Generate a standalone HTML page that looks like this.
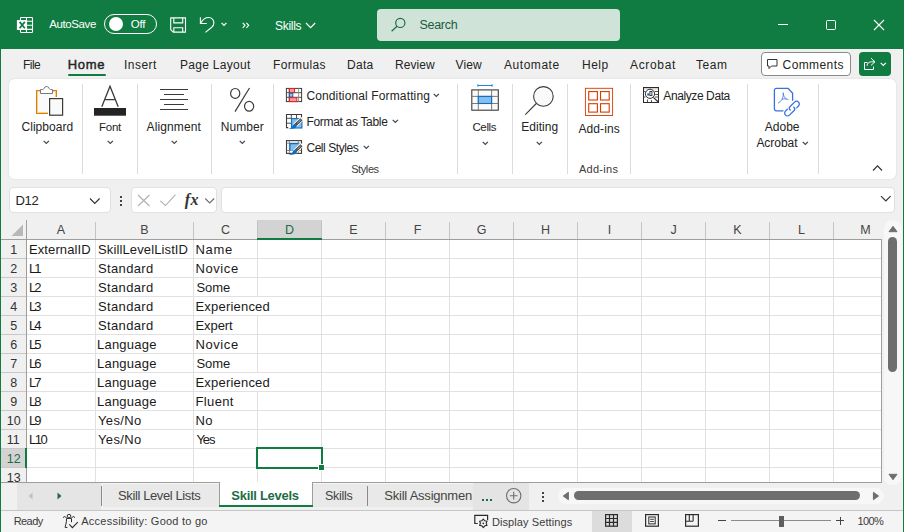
<!DOCTYPE html>
<html lang="en"><head><meta charset="utf-8"><title>Skills - Excel</title>
<style>
html,body{margin:0;padding:0;}
body{width:904px;height:532px;overflow:hidden;position:relative;background:#f0f0f0;font-family:"Liberation Sans",sans-serif;}
#app{position:absolute;left:0;top:0;width:904px;height:532px;overflow:hidden;}
#app div,#app span,#app svg{position:absolute;display:block;}
#app span{white-space:nowrap;}
</style></head><body><div id="app">
<div style="left:0px;top:0px;width:904px;height:49px;background:#107c41;"></div>
<svg style="left:16px;top:16px;" width="18" height="18" viewBox="0 0 18 18" fill="none"><rect x="4.5" y="1.5" width="12" height="15" rx="0.8" stroke="#fff" stroke-width="1.1"/><path d="M10.5 1.5v15M4.5 5.2h12M4.5 9.3h12M4.5 13.4h12" stroke="#fff" stroke-width="1.1"/><rect x="0.9" y="4.1" width="9.6" height="9.9" fill="#fff"/><path d="M3.6 5.9l5.2 6.3M8.8 5.9l-5.2 6.3" stroke="#107c41" stroke-width="1.7"/></svg>
<div style="left:104px;top:14px;width:53px;height:20px;box-sizing:border-box;border:1px solid #fff;border-radius:10px;"></div>
<div style="left:109.2px;top:17.3px;width:13.6px;height:13.6px;border-radius:7px;background:#fff;"></div>
<svg style="left:169px;top:16px;" width="18" height="18" viewBox="0 0 18 18" fill="none"><path d="M1.7 1.9H16.5V16.1H4.2L1.7 13.6z" stroke="#fff" stroke-width="1.1" stroke-linejoin="round"/><path d="M4.8 1.9V6.9H13.7V1.9M4.8 16.1V11.7H13.7V16.1" stroke="#fff" stroke-width="1.1"/></svg>
<svg style="left:198px;top:15px;" width="18" height="19" viewBox="0 0 18 19" fill="none"><path d="M2.4 2.3V8.5H8.8" stroke="#fff" stroke-width="1.1"/><path d="M2.7 8.2C4.5 4.8 7.5 2.5 10.7 2.5C13.8 2.5 15.9 4.9 15.9 7.9C15.9 10 14.8 11.4 13.5 12.5L7.4 17.4" stroke="#fff" stroke-width="1.1"/></svg>
<svg style="left:221px;top:22px;" width="6" height="5" viewBox="0 0 6 5" fill="none"><path d="M0.6 0.8L3 3.4 5.4 0.8" stroke="#fff" stroke-width="1.2"/></svg>
<svg style="left:242px;top:22.4px;" width="8" height="7" viewBox="0 0 8 7" fill="none"><path d="M0.7 0.8L3 3.3 0.7 5.8M4.4 0.8L6.7 3.3 4.4 5.8" stroke="#fff" stroke-width="1.1"/></svg>
<svg style="left:305px;top:22px;" width="12" height="7" viewBox="0 0 12 7" fill="none"><path d="M1 1l4.6 4.6L10.2 1" stroke="#fff" stroke-width="1.2"/></svg>
<div style="left:377px;top:9px;width:243px;height:32px;background:#cfe3d8;border-radius:4px;"></div>
<svg style="left:390px;top:16px;" width="17" height="17" viewBox="0 0 17 17" fill="none"><circle cx="10.3" cy="6.9" r="4.6" stroke="#1e6b45" stroke-width="1.2"/><path d="M7 10.3L1.6 15.2" stroke="#1e6b45" stroke-width="1.2"/></svg>
<div style="left:778px;top:24px;width:10px;height:1px;background:#fff;"></div>
<div style="left:826px;top:20px;width:10px;height:10px;box-sizing:border-box;border:1px solid #fff;border-radius:1.5px;"></div>
<svg style="left:873px;top:19px;" width="12" height="12" viewBox="0 0 12 12" fill="none"><path d="M1 1l10 10M11 1L1 11" stroke="#fff" stroke-width="1.1"/></svg>
<div style="left:68px;top:74px;width:38px;height:2px;background:#107c41;border-radius:1px;"></div>
<div style="left:761px;top:52px;width:90px;height:24px;box-sizing:border-box;border:1px solid #8a8a8a;border-radius:4px;background:#fff;"></div>
<svg style="left:766px;top:58px;" width="12" height="12" viewBox="0 0 12 12" fill="none"><path d="M1.5 1.5h9.5v6.5H5.5L3 10.6V8H1.5z" stroke="#333" stroke-width="1" stroke-linejoin="round"/></svg>
<div style="left:859px;top:52px;width:32px;height:24px;background:#107c41;border-radius:4px;"></div>
<svg style="left:863px;top:57px;" width="13" height="14" viewBox="0 0 13 14" fill="none"><path d="M4.5 5.5H1.5v7h9V9.5" stroke="#fff"/><path d="M8 1.2l4 3.6-4 3.6M12 4.8H8.5C6 4.8 4.2 6.3 4 8.8" stroke="#fff"/></svg>
<svg style="left:880px;top:62px;" width="7" height="5" viewBox="0 0 7 5" fill="none"><path d="M0.7 0.8L3.3 3.4 5.9 0.8" stroke="#fff" stroke-width="1.2"/></svg>
<div style="left:9px;top:79px;width:886.5px;height:100px;background:#ffffff;border-radius:5.5px;box-shadow:0 0 1.5px rgba(0,0,0,.16);"></div>
<div style="left:82px;top:84px;width:1px;height:90px;background:#dcdcdc;"></div>
<div style="left:137px;top:84px;width:1px;height:90px;background:#dcdcdc;"></div>
<div style="left:211px;top:84px;width:1px;height:90px;background:#dcdcdc;"></div>
<div style="left:273px;top:84px;width:1px;height:90px;background:#dcdcdc;"></div>
<div style="left:457px;top:84px;width:1px;height:90px;background:#dcdcdc;"></div>
<div style="left:512px;top:84px;width:1px;height:90px;background:#dcdcdc;"></div>
<div style="left:567px;top:84px;width:1px;height:90px;background:#dcdcdc;"></div>
<div style="left:630px;top:84px;width:1px;height:90px;background:#dcdcdc;"></div>
<div style="left:747px;top:84px;width:1px;height:90px;background:#dcdcdc;"></div>
<div style="left:818px;top:84px;width:1px;height:90px;background:#dcdcdc;"></div>
<svg style="left:34px;top:84px;" width="32" height="34" viewBox="0 0 32 34" fill="none"><rect x="2.5" y="6.5" width="20" height="23" fill="#fafafa" stroke="#e07a10"/><rect x="3.5" y="7.5" width="18" height="21" stroke="#f8d27f"/><path d="M6.5 9.5V5.5H8.5C9.6 5.5 9.9 4.7 10.3 4C10.7 3.2 11.2 2.6 12 2.6H13.2C14 2.6 14.5 3.2 14.9 4C15.3 4.7 15.6 5.5 16.7 5.5H18.5V9.5z" fill="#fff" stroke="#7a7a7a"/><rect x="14" y="13" width="16.5" height="20" fill="#fff"/><rect x="15.6" y="14.6" width="13" height="16.6" fill="#fafafa" stroke="#3b3b3b" stroke-width="1.2"/></svg>
<svg style="left:43px;top:140px;" width="7" height="5" viewBox="0 0 7 5" fill="none"><path d="M0.7 0.8L3.3 3.4 5.9 0.8" stroke="#444" stroke-width="1.2"/></svg>
<svg style="left:94px;top:85px;" width="32" height="32" viewBox="0 0 32 32" fill="none"><path d="M7.8 21.7L16 1.2 24.2 21.7M11.3 14.7h9.4" stroke="#3b3b3b" stroke-width="1.3" stroke-linejoin="miter"/><rect x="0" y="23" width="32" height="7.7" fill="#242424"/></svg>
<svg style="left:106.5px;top:140px;" width="7" height="5" viewBox="0 0 7 5" fill="none"><path d="M0.7 0.8L3.3 3.4 5.9 0.8" stroke="#444" stroke-width="1.2"/></svg>
<svg style="left:159px;top:86px;" width="30" height="26" viewBox="0 0 30 26" fill="none"><path d="M1 3.5h28M5 8.5h20M1 13.5h28M5 18.5h20M1 23.5h28" stroke="#3b3b3b" stroke-width="1.1"/></svg>
<svg style="left:170.5px;top:140px;" width="7" height="5" viewBox="0 0 7 5" fill="none"><path d="M0.7 0.8L3.3 3.4 5.9 0.8" stroke="#444" stroke-width="1.2"/></svg>
<svg style="left:228px;top:86px;" width="28" height="28" viewBox="0 0 28 28" fill="none"><ellipse cx="7.2" cy="7.4" rx="4.6" ry="4.9" stroke="#3b3b3b" stroke-width="1.2"/><ellipse cx="21.1" cy="20.3" rx="4.6" ry="4.9" stroke="#3b3b3b" stroke-width="1.2"/><path d="M21.5 2L7 25.6" stroke="#3b3b3b" stroke-width="1.2"/></svg>
<svg style="left:238.5px;top:140px;" width="7" height="5" viewBox="0 0 7 5" fill="none"><path d="M0.7 0.8L3.3 3.4 5.9 0.8" stroke="#444" stroke-width="1.2"/></svg>
<svg style="left:285px;top:87px;" width="18" height="16" viewBox="0 0 18 16" fill="none"><rect x="1.4" y="1.4" width="15.2" height="13.2" fill="#fff" stroke="#3b3b3b"/><path d="M1.4 5.7h15.2M1.4 10.3h15.2M4.2 1.4v13.2" stroke="#3b3b3b" stroke-width="0.9"/><path d="M13.6 1.4v13.2" stroke="#8a8a8a" stroke-width="0.9"/><rect x="4.5" y="1.5" width="5" height="4" fill="#ff9aa2" stroke="#e0241b"/><rect x="4.5" y="6.3" width="3.3" height="3.6" fill="#8cc3f0" stroke="#0f6cbd"/><rect x="4.5" y="10.7" width="7.3" height="3.9" fill="#ff9aa2" stroke="#e0241b"/></svg>
<svg style="left:433.3px;top:93px;" width="7" height="5" viewBox="0 0 7 5" fill="none"><path d="M0.7 0.8L3.3 3.4 5.9 0.8" stroke="#444" stroke-width="1.2"/></svg>
<svg style="left:285px;top:113px;" width="18" height="17" viewBox="0 0 18 17" fill="none"><path d="M3.2 14.6H1.5V1.5H16.5V4.6" stroke="#3b3b3b" stroke-width="1.1"/><path d="M1.5 5.3h5M1.5 10.2h5M6.3 1.5v4M11.5 1.5v4" stroke="#3b3b3b" stroke-width="0.9"/><rect x="6.6" y="5.6" width="10.3" height="9.4" fill="#83beec" stroke="#0f6cbd" stroke-width="1.1"/><path d="M17.2 5.3L9.5 13" stroke="#fff" stroke-width="4.5"/><path d="M16.5 6.2L10.7 11.8" stroke="#3b3b3b" stroke-width="2.8"/><path d="M16.2 6.5L11.2 11.3" stroke="#fff" stroke-width="1" stroke-dasharray="1 0.7"/><path d="M10.2 10.8l2 2c-1.2 2.8-4.6 3.6-8.7 2.6 2.6-.3 3.8-1.2 4.4-2.8.4-1 1.3-1.7 2.3-1.8z" fill="#0f6cbd"/></svg>
<svg style="left:391.5px;top:119px;" width="7" height="5" viewBox="0 0 7 5" fill="none"><path d="M0.7 0.8L3.3 3.4 5.9 0.8" stroke="#444" stroke-width="1.2"/></svg>
<svg style="left:285px;top:139px;" width="18" height="17" viewBox="0 0 18 17" fill="none"><rect x="1.5" y="1.6" width="15" height="12.8" fill="#fff" stroke="#3b3b3b" stroke-width="1.1"/><path d="M4.4 1.6v12.8M13.3 1.6v12.8M1.5 4.2h15M1.5 11.5h15" stroke="#6e6e6e" stroke-width="0.8"/><rect x="4.7" y="4.5" width="8.6" height="7" fill="#83beec"/><path d="M4.9 11.5V4.7h8.4" stroke="#0f6cbd" stroke-width="1.2"/><path d="M17.2 5.3L9.5 13" stroke="#fff" stroke-width="4.5"/><path d="M16.5 6.2L10.7 11.8" stroke="#3b3b3b" stroke-width="2.8"/><path d="M16.2 6.5L11.2 11.3" stroke="#fff" stroke-width="1" stroke-dasharray="1 0.7"/><path d="M10.2 10.8l2 2c-1.2 2.8-4.6 3.6-8.7 2.6 2.6-.3 3.8-1.2 4.4-2.8.4-1 1.3-1.7 2.3-1.8z" fill="#0f6cbd"/></svg>
<svg style="left:362.8px;top:145px;" width="7" height="5" viewBox="0 0 7 5" fill="none"><path d="M0.7 0.8L3.3 3.4 5.9 0.8" stroke="#444" stroke-width="1.2"/></svg>
<svg style="left:470px;top:84px;" width="30" height="28" viewBox="0 0 30 28" fill="none"><path d="M7.9 1.5H22.1M7.9 0.2v2.6M22.1 0.2v2.6" stroke="#1e88d2" stroke-width="1"/><rect x="1.8" y="5.9" width="26.5" height="20.3" fill="#fafafa" stroke="#3b3b3b" stroke-width="1.1"/><path d="M8.3 5.9v20.3M21.6 5.9v20.3M1.8 12.4h26.5M1.8 19.5h26.5" stroke="#6e6e6e" stroke-width="0.9"/><rect x="8.3" y="12.4" width="13.3" height="7.1" fill="#83beec" stroke="#0f6cbd" stroke-width="1.1"/></svg>
<svg style="left:481.5px;top:140.5px;" width="7" height="5" viewBox="0 0 7 5" fill="none"><path d="M0.7 0.8L3.3 3.4 5.9 0.8" stroke="#444" stroke-width="1.2"/></svg>
<svg style="left:523px;top:85px;" width="34" height="32" viewBox="0 0 34 32" fill="none"><circle cx="20.4" cy="11.4" r="9.8" fill="#fafafa" stroke="#3b3b3b" stroke-width="1.1"/><path d="M13.3 18.5L2.3 29.7" stroke="#3b3b3b" stroke-width="1.1"/></svg>
<svg style="left:536px;top:140.5px;" width="7" height="5" viewBox="0 0 7 5" fill="none"><path d="M0.7 0.8L3.3 3.4 5.9 0.8" stroke="#444" stroke-width="1.2"/></svg>
<svg style="left:584px;top:87px;" width="30" height="30" viewBox="0 0 30 30" fill="none"><rect x="1.4" y="1.3" width="27.2" height="27.2" stroke="#d83b01" stroke-width="0.9"/><rect x="4.7" y="4.6" width="8.7" height="8.4" stroke="#d83b01" stroke-width="1.1"/><rect x="16.5" y="4.6" width="8.7" height="8.4" stroke="#d83b01" stroke-width="1.1"/><rect x="4.7" y="16.7" width="8.7" height="8.4" stroke="#d83b01" stroke-width="1.1"/><rect x="16.5" y="16.7" width="8.7" height="8.4" stroke="#d83b01" stroke-width="1.1"/></svg>
<svg style="left:642px;top:86px;" width="18" height="18" viewBox="0 0 18 18" fill="none"><rect x="1.5" y="1.5" width="15" height="15" fill="#fff" stroke="#2b2b2b"/><rect x="2" y="2" width="14" height="1.6" fill="#d4d4d4"/><path d="M12.8 5.5h3.2M13.2 8.5h2.8M13 11h3M5.5 13.5v2.5M9.5 14v2M2 5.5h1.5M2 11h1.5" stroke="#2b2b2b" stroke-width="0.8"/><circle cx="8" cy="7.8" r="4.6" fill="#fff" stroke="#2b2b2b"/><rect x="5.3" y="7.3" width="2" height="2.3" fill="#0f6cbd"/><rect x="7.9" y="5.5" width="2" height="4.1" fill="#fff" stroke="#2b2b2b" stroke-width="0.9"/><path d="M11.4 11.4L16.8 16.5" stroke="#2b2b2b" stroke-width="1.2"/></svg>
<svg style="left:772px;top:86px;" width="29" height="32" viewBox="0 0 29 32" fill="none"><path d="M11.4 24.8H4.4a2 2 0 0 1-2-2V4.3a2 2 0 0 1 2-2H16L20.6 7.2V14.7" stroke="#3b70e0" stroke-width="1.3" stroke-linejoin="round"/><path d="M11.2 6.7c.4 2.4-.2 4.7-1.3 6.7-1 1.7-2.3 3-3.9 3.7M10 13.3c2.1-.7 4.3-.6 6.4.3M11.2 6.7c.1 2.7 1.3 5 3.3 6.6" stroke="#3b70e0" stroke-width="0.8"/><g transform="translate(20 22.6) rotate(-45)"><path d="M-2.3 -0.3C-2.3 -1.8 -1.6 -2.8 -0.2 -2.8H6.4a2.8 2.8 0 0 1 0 5.6H3.8M2.3 0.3C2.3 1.8 1.6 2.8 0.2 2.8H-6.4a2.8 2.8 0 0 1 0 -5.6H-3.8" stroke="#3b70e0" stroke-width="1.3" stroke-linecap="round"/></g></svg>
<svg style="left:801.5px;top:140.5px;" width="7" height="5" viewBox="0 0 7 5" fill="none"><path d="M0.7 0.8L3.3 3.4 5.9 0.8" stroke="#444" stroke-width="1.2"/></svg>
<svg style="left:872px;top:164px;" width="12" height="8" viewBox="0 0 12 8" fill="none"><path d="M1 6.5L5.5 1.8 10 6.5" stroke="#333" stroke-width="1.2"/></svg>
<div style="left:9px;top:187px;width:102px;height:26px;box-sizing:border-box;border:1px solid #e0e0e0;border-radius:4px;background:#fff;"></div>
<div style="left:131px;top:187px;width:86px;height:26px;box-sizing:border-box;border:1px solid #e0e0e0;border-radius:4px;background:#fff;"></div>
<div style="left:221px;top:187px;width:674px;height:26px;box-sizing:border-box;border:1px solid #e0e0e0;border-radius:4px;background:#fff;"></div>
<svg style="left:89px;top:197px;" width="12" height="8" viewBox="0 0 12 8" fill="none"><path d="M1 1.5L5.8 6.3 10.6 1.5" stroke="#333" stroke-width="1.2"/></svg>
<div style="left:120px;top:195.5px;width:2px;height:2px;background:#444;"></div>
<div style="left:120px;top:199.5px;width:2px;height:2px;background:#444;"></div>
<div style="left:120px;top:203.5px;width:2px;height:2px;background:#444;"></div>
<svg style="left:137px;top:194px;" width="14" height="13" viewBox="0 0 14 13" fill="none"><path d="M1 1l11.5 11M12.5 1L1 12" stroke="#b0b0b0" stroke-width="1.1"/></svg>
<svg style="left:158px;top:194px;" width="19" height="13" viewBox="0 0 19 13" fill="none"><path d="M2.3 6.8l5.2 4.7L17.5 0.7" stroke="#b0b0b0" stroke-width="1.1"/></svg>
<svg style="left:204px;top:197px;" width="12" height="8" viewBox="0 0 12 8" fill="none"><path d="M1.2 1.5l4.5 4.5L10.2 1.5" stroke="#6e6e6e" stroke-width="1.1"/></svg>
<svg style="left:880px;top:195px;" width="12" height="8" viewBox="0 0 12 8" fill="none"><path d="M1 1.2L5.8 6 10.6 1.2" stroke="#333" stroke-width="1.2"/></svg>
<div style="left:27px;top:240px;width:854px;height:242px;background:#ffffff;"></div>
<div style="left:1px;top:220px;width:881px;height:19px;background:#f0f0f0;"></div>
<div style="left:257px;top:220px;width:65px;height:18px;background:#d3d3d3;"></div>
<div style="left:257px;top:221px;width:1px;height:17px;background:#c2c2c2;"></div>
<div style="left:321px;top:221px;width:1px;height:17px;background:#c2c2c2;"></div>
<div style="left:257px;top:238px;width:65px;height:2px;background:#107c41;"></div>
<div style="left:1px;top:449px;width:24px;height:18px;background:#d3d3d3;"></div>
<div style="left:25px;top:448px;width:2px;height:20px;background:#107c41;"></div>
<div style="left:95px;top:240px;width:1px;height:242px;background:#e1e1e1;"></div>
<div style="left:193px;top:240px;width:1px;height:242px;background:#e1e1e1;"></div>
<div style="left:257px;top:240px;width:1px;height:242px;background:#e1e1e1;"></div>
<div style="left:321px;top:240px;width:1px;height:242px;background:#e1e1e1;"></div>
<div style="left:385px;top:240px;width:1px;height:242px;background:#e1e1e1;"></div>
<div style="left:449px;top:240px;width:1px;height:242px;background:#e1e1e1;"></div>
<div style="left:513px;top:240px;width:1px;height:242px;background:#e1e1e1;"></div>
<div style="left:577px;top:240px;width:1px;height:242px;background:#e1e1e1;"></div>
<div style="left:641px;top:240px;width:1px;height:242px;background:#e1e1e1;"></div>
<div style="left:705px;top:240px;width:1px;height:242px;background:#e1e1e1;"></div>
<div style="left:769px;top:240px;width:1px;height:242px;background:#e1e1e1;"></div>
<div style="left:833px;top:240px;width:1px;height:242px;background:#e1e1e1;"></div>
<div style="left:27px;top:258px;width:854px;height:1px;background:#e1e1e1;"></div>
<div style="left:27px;top:277px;width:854px;height:1px;background:#e1e1e1;"></div>
<div style="left:27px;top:296px;width:854px;height:1px;background:#e1e1e1;"></div>
<div style="left:27px;top:315px;width:854px;height:1px;background:#e1e1e1;"></div>
<div style="left:27px;top:334px;width:854px;height:1px;background:#e1e1e1;"></div>
<div style="left:27px;top:353px;width:854px;height:1px;background:#e1e1e1;"></div>
<div style="left:27px;top:372px;width:854px;height:1px;background:#e1e1e1;"></div>
<div style="left:27px;top:391px;width:854px;height:1px;background:#e1e1e1;"></div>
<div style="left:27px;top:410px;width:854px;height:1px;background:#e1e1e1;"></div>
<div style="left:27px;top:429px;width:854px;height:1px;background:#e1e1e1;"></div>
<div style="left:27px;top:448px;width:854px;height:1px;background:#e1e1e1;"></div>
<div style="left:27px;top:467px;width:854px;height:1px;background:#e1e1e1;"></div>
<div style="left:257px;top:297px;width:1px;height:18px;background:#ffffff;"></div>
<div style="left:257px;top:373px;width:1px;height:18px;background:#ffffff;"></div>
<div style="left:26px;top:222px;width:1px;height:17px;background:#c4c4c4;"></div>
<div style="left:95px;top:222px;width:1px;height:17px;background:#c4c4c4;"></div>
<div style="left:193px;top:222px;width:1px;height:17px;background:#c4c4c4;"></div>
<div style="left:385px;top:222px;width:1px;height:17px;background:#c4c4c4;"></div>
<div style="left:449px;top:222px;width:1px;height:17px;background:#c4c4c4;"></div>
<div style="left:513px;top:222px;width:1px;height:17px;background:#c4c4c4;"></div>
<div style="left:577px;top:222px;width:1px;height:17px;background:#c4c4c4;"></div>
<div style="left:641px;top:222px;width:1px;height:17px;background:#c4c4c4;"></div>
<div style="left:705px;top:222px;width:1px;height:17px;background:#c4c4c4;"></div>
<div style="left:769px;top:222px;width:1px;height:17px;background:#c4c4c4;"></div>
<div style="left:833px;top:222px;width:1px;height:17px;background:#c4c4c4;"></div>
<div style="left:26px;top:220px;width:1px;height:262px;background:#9e9e9e;"></div>
<div style="left:1px;top:239px;width:880px;height:1px;background:#9e9e9e;"></div>
<div style="left:257px;top:238px;width:65px;height:2px;background:#107c41;"></div>
<div style="left:1px;top:258px;width:25px;height:1px;background:#c8c8c8;"></div>
<div style="left:1px;top:277px;width:25px;height:1px;background:#c8c8c8;"></div>
<div style="left:1px;top:296px;width:25px;height:1px;background:#c8c8c8;"></div>
<div style="left:1px;top:315px;width:25px;height:1px;background:#c8c8c8;"></div>
<div style="left:1px;top:334px;width:25px;height:1px;background:#c8c8c8;"></div>
<div style="left:1px;top:353px;width:25px;height:1px;background:#c8c8c8;"></div>
<div style="left:1px;top:372px;width:25px;height:1px;background:#c8c8c8;"></div>
<div style="left:1px;top:391px;width:25px;height:1px;background:#c8c8c8;"></div>
<div style="left:1px;top:410px;width:25px;height:1px;background:#c8c8c8;"></div>
<div style="left:1px;top:429px;width:25px;height:1px;background:#c8c8c8;"></div>
<div style="left:1px;top:448px;width:25px;height:1px;background:#c8c8c8;"></div>
<div style="left:1px;top:467px;width:25px;height:1px;background:#c8c8c8;"></div>
<div style="left:25px;top:448px;width:2px;height:20px;background:#107c41;"></div>
<div style="left:881px;top:239px;width:1px;height:244px;background:#9e9e9e;"></div>
<div style="left:1px;top:482px;width:881px;height:1px;background:#9e9e9e;"></div>
<svg style="left:11px;top:224px;" width="13" height="13" viewBox="0 0 13 13" fill="none"><path d="M12 0.5V12H0.5z" fill="#b8b8b8"/></svg>
<div style="left:256px;top:447px;width:67px;height:22px;box-sizing:border-box;border:2px solid #107c41;"></div>
<div style="left:318px;top:464px;width:7px;height:7px;background:#ffffff;"></div>
<div style="left:319px;top:465px;width:5px;height:5px;background:#107c41;"></div>
<div style="left:1px;top:483px;width:902px;height:49px;background:#f0f0f0;"></div>
<div style="left:884px;top:220px;width:17.5px;height:265px;background:#f7f7f7;border-radius:8.7px;"></div>
<svg style="left:887.5px;top:224.5px;" width="10" height="8" viewBox="0 0 10 8" fill="none"><path d="M5 1.3L9 6.7H1z" fill="#6e6e6e" stroke="#6e6e6e" stroke-width="1" stroke-linejoin="round"/></svg>
<div style="left:888px;top:237px;width:9px;height:135px;background:#6e6e6e;border-radius:4.5px;"></div>
<svg style="left:887.5px;top:473px;" width="10" height="8" viewBox="0 0 10 8" fill="none"><path d="M5 6.7L9 1.3H1z" fill="#6e6e6e" stroke="#6e6e6e" stroke-width="1" stroke-linejoin="round"/></svg>
<div style="left:17px;top:483px;width:84px;height:27px;background:#e5e5e5;"></div>
<div style="left:103px;top:484px;width:370px;height:23px;background:#e9e9e9;"></div>
<div style="left:103px;top:483px;width:370px;height:1px;background:#f6f6f6;"></div>
<div style="left:473px;top:483px;width:56px;height:27px;background:#e4e4e4;"></div>
<div style="left:1px;top:482px;width:219px;height:1px;background:#9e9e9e;"></div>
<svg style="left:28px;top:492px;" width="5" height="8" viewBox="0 0 5 8" fill="none"><path d="M4.5 0.5v7L0.5 4z" fill="#c0c0c0"/></svg>
<svg style="left:57px;top:492px;" width="5" height="8" viewBox="0 0 5 8" fill="none"><path d="M0.5 0.5v7L4.5 4z" fill="#1f6b45"/></svg>
<div style="left:101px;top:486px;width:1px;height:20px;background:#8a8a8a;"></div>
<div style="left:220px;top:482px;width:92px;height:23px;background:#ffffff;"></div>
<div style="left:219px;top:482px;width:1px;height:25px;background:#9e9e9e;"></div>
<div style="left:312px;top:482px;width:1px;height:25px;background:#9e9e9e;"></div>
<div style="left:219px;top:505px;width:94px;height:2px;background:#107c41;"></div>
<div style="left:367px;top:486px;width:1px;height:20px;background:#8a8a8a;"></div>
<div style="left:482px;top:499px;width:2px;height:2px;background:#1f6b45;"></div>
<div style="left:486px;top:499px;width:2px;height:2px;background:#1f6b45;"></div>
<div style="left:490px;top:499px;width:2px;height:2px;background:#1f6b45;"></div>
<svg style="left:505px;top:487px;" width="18" height="18" viewBox="0 0 18 18" fill="none"><circle cx="8.7" cy="8.7" r="7.2" stroke="#6e6e6e" stroke-width="1.1"/><path d="M8.7 4.8v7.8M4.8 8.7h7.8" stroke="#6e6e6e" stroke-width="1.1"/></svg>
<div style="left:541.5px;top:492px;width:2px;height:2px;background:#444;"></div>
<div style="left:541.5px;top:496px;width:2px;height:2px;background:#444;"></div>
<div style="left:541.5px;top:500px;width:2px;height:2px;background:#444;"></div>
<div style="left:557.5px;top:487.7px;width:326px;height:16px;background:#f7f7f7;border-radius:8px;"></div>
<svg style="left:562px;top:491px;" width="8" height="10" viewBox="0 0 8 10" fill="none"><path d="M6.4 1.3v7.4L1.2 5z" fill="#6e6e6e" stroke="#6e6e6e" stroke-width="1" stroke-linejoin="round"/></svg>
<div style="left:574px;top:491px;width:286px;height:9px;background:#6e6e6e;border-radius:4.5px;"></div>
<svg style="left:872px;top:491px;" width="8" height="10" viewBox="0 0 8 10" fill="none"><path d="M1.4 1.3v7.4L6.6 5z" fill="#6e6e6e" stroke="#6e6e6e" stroke-width="1" stroke-linejoin="round"/></svg>
<div style="left:1px;top:511px;width:902px;height:21px;background:#f4f4f4;"></div>
<div style="left:1px;top:510px;width:902px;height:1px;background:#c6c6c6;"></div>
<svg style="left:62px;top:514px;" width="17" height="16" viewBox="0 0 17 16" fill="none"><circle cx="7" cy="2.1" r="1.8" stroke="#2b2b2b"/><path d="M1.5 3.8c-.4-1.1.9-1.7 1.7-.9L5 4.4h4l1.8-1.5c.8-.8 2.1-.2 1.7.9" stroke="#2b2b2b"/><path d="M4.5 4.5c.2 2.4-.2 4.4-.8 6.3-.3 1-.6 1.8-.6 2.6h2.3M9.5 4.5v3.7" stroke="#2b2b2b"/><path d="M7.3 10.4l3.1 3.2 5.4-5.4" stroke="#2b2b2b" stroke-width="1.1"/></svg>
<svg style="left:474px;top:514px;" width="15" height="15" viewBox="0 0 15 15" fill="none"><path d="M3.7 9.5H0.8V1.4H13.6V6.2" stroke="#2b2b2b" stroke-width="1.2"/><path d="M9.3 5.0L10.8 6.8L13.0 7.2L12.2 9.3L13.0 11.4L10.8 11.8L9.3 13.6L7.9 11.8L5.6 11.4L6.4 9.3L5.6 7.2L7.8 6.8z" fill="#f4f4f4" stroke="#2b2b2b" stroke-width="1.1" stroke-linejoin="round"/><circle cx="9.3" cy="9.3" r="0.9" fill="#2b2b2b"/></svg>
<div style="left:592px;top:511px;width:40px;height:21px;background:#dcdcdc;"></div>
<svg style="left:605px;top:514px;" width="14" height="14" viewBox="0 0 14 14" fill="none"><rect x="0.6" y="0.6" width="11.8" height="11.6" stroke="#2b2b2b" stroke-width="1.2"/><path d="M0.6 4.5h11.8M0.6 8.3h11.8M4.5 0.6v11.6M8.5 0.6v11.6" stroke="#2b2b2b" stroke-width="1.2"/></svg>
<svg style="left:645px;top:514px;" width="15" height="14" viewBox="0 0 15 14" fill="none"><rect x="0.6" y="0.6" width="12.8" height="11.6" stroke="#2b2b2b" stroke-width="1.2"/><rect x="3.8" y="3" width="6.4" height="6.9" stroke="#2b2b2b" stroke-width="1"/><path d="M5.2 5.3h3.6M5.2 7.5h3.6" stroke="#2b2b2b" stroke-width="0.9"/></svg>
<svg style="left:685px;top:514px;" width="15" height="14" viewBox="0 0 15 14" fill="none"><rect x="0.6" y="0.6" width="12.8" height="11.6" stroke="#2b2b2b" stroke-width="1.2"/><path d="M4.3 0.6v6.7M8.1 0.6v6.7M0.6 7.3h7.5" stroke="#2b2b2b" stroke-width="1.1"/></svg>
<div style="left:718px;top:520px;width:8px;height:1px;background:#444;"></div>
<div style="left:731px;top:520px;width:100px;height:1px;background:#8a8a8a;"></div>
<div style="left:779px;top:516px;width:5px;height:11px;background:#5e5e5e;"></div>
<div style="left:836px;top:520px;width:8px;height:1px;background:#444;"></div>
<div style="left:839.5px;top:516.5px;width:1px;height:8px;background:#444;"></div>
<div style="left:0px;top:0px;width:1px;height:532px;background:#107c41;"></div>
<div style="left:903px;top:0px;width:1px;height:532px;background:#107c41;"></div>
<span style="left:49.20px;top:16.42px;font-size:11.5px;line-height:17px;color:#fff;letter-spacing:-0.382px;">AutoSave</span>
<span style="left:130.70px;top:16.42px;font-size:11.5px;line-height:17px;color:#fff;letter-spacing:-0.216px;">Off</span>
<span style="left:275.00px;top:16.94px;font-size:12px;line-height:18px;color:#fff;letter-spacing:-0.300px;">Skills</span>
<span style="left:419.50px;top:15.97px;font-size:12.5px;line-height:19px;color:#1e5c3c;letter-spacing:-0.291px;">Search</span>
<span style="left:23.00px;top:55.64px;font-size:12px;line-height:18px;color:#242424;letter-spacing:-0.554px;">File</span>
<span style="left:124.00px;top:55.64px;font-size:12px;line-height:18px;color:#242424;letter-spacing:0.464px;">Insert</span>
<span style="left:180.00px;top:55.64px;font-size:12px;line-height:18px;color:#242424;letter-spacing:0.295px;">Page Layout</span>
<span style="left:273.00px;top:55.64px;font-size:12px;line-height:18px;color:#242424;letter-spacing:0.356px;">Formulas</span>
<span style="left:347.00px;top:55.64px;font-size:12px;line-height:18px;color:#242424;letter-spacing:0.275px;">Data</span>
<span style="left:395.00px;top:55.64px;font-size:12px;line-height:18px;color:#242424;letter-spacing:0.064px;">Review</span>
<span style="left:455.60px;top:55.64px;font-size:12px;line-height:18px;color:#242424;letter-spacing:0.091px;">View</span>
<span style="left:504.00px;top:55.64px;font-size:12px;line-height:18px;color:#242424;letter-spacing:0.544px;">Automate</span>
<span style="left:582.00px;top:55.64px;font-size:12px;line-height:18px;color:#242424;letter-spacing:0.498px;">Help</span>
<span style="left:630.00px;top:55.64px;font-size:12px;line-height:18px;color:#242424;letter-spacing:0.663px;">Acrobat</span>
<span style="left:696.00px;top:55.64px;font-size:12px;line-height:18px;color:#242424;letter-spacing:0.551px;">Team</span>
<span style="left:67.70px;top:55.20px;font-size:13px;line-height:20px;color:#242424;letter-spacing:0.700px;-webkit-text-stroke:0.45px #242424;">Home</span>
<span style="left:782.60px;top:56.24px;font-size:12px;line-height:18px;color:#242424;letter-spacing:0.398px;">Comments</span>
<span style="left:21.50px;top:118.14px;font-size:12px;line-height:18px;color:#242424;letter-spacing:0.039px;">Clipboard</span>
<span style="left:99.00px;top:118.82px;font-size:11.5px;line-height:17px;color:#242424;letter-spacing:-0.272px;">Font</span>
<span style="left:146.50px;top:118.14px;font-size:12px;line-height:18px;color:#242424;letter-spacing:0.122px;">Alignment</span>
<span style="left:220.70px;top:118.14px;font-size:12px;line-height:18px;color:#242424;letter-spacing:0.063px;">Number</span>
<span style="left:306.40px;top:87.14px;font-size:12px;line-height:18px;color:#242424;letter-spacing:0.131px;">Conditional Formatting</span>
<span style="left:306.40px;top:113.14px;font-size:12px;line-height:18px;color:#242424;letter-spacing:-0.311px;">Format as Table</span>
<span style="left:306.40px;top:139.04px;font-size:12px;line-height:18px;color:#242424;letter-spacing:-0.428px;">Cell Styles</span>
<span style="left:351.20px;top:160.79px;font-size:11px;line-height:16px;color:#3b3b3b;letter-spacing:-0.411px;">Styles</span>
<span style="left:472.40px;top:118.82px;font-size:11.5px;line-height:17px;color:#242424;letter-spacing:-0.353px;">Cells</span>
<span style="left:521.20px;top:118.14px;font-size:12px;line-height:18px;color:#242424;letter-spacing:0.064px;">Editing</span>
<span style="left:578.50px;top:119.64px;font-size:12px;line-height:18px;color:#242424;letter-spacing:0.085px;">Add-ins</span>
<span style="left:579.00px;top:160.79px;font-size:11px;line-height:16px;color:#3b3b3b;letter-spacing:0.267px;">Add-ins</span>
<span style="left:663.30px;top:87.24px;font-size:12px;line-height:18px;color:#242424;letter-spacing:-0.400px;">Analyze Data</span>
<span style="left:764.80px;top:117.84px;font-size:12px;line-height:18px;color:#242424;letter-spacing:-0.006px;">Adobe</span>
<span style="left:756.40px;top:134.04px;font-size:12px;line-height:18px;color:#242424;letter-spacing:-0.037px;">Acrobat</span>
<span style="left:15.50px;top:190.70px;font-size:13px;line-height:20px;color:#242424;letter-spacing:-0.309px;">D12</span>
<span style="left:184.80px;top:187.60px;font-size:16px;line-height:24px;color:#333;font-weight:700;font-family:'Liberation Serif', serif;font-style:italic;letter-spacing:0.400px;">fx</span>
<span style="left:27.00px;top:220.67px;font-size:12.5px;line-height:19px;color:#444;width:68px;text-align:center;">A</span>
<span style="left:96.00px;top:220.67px;font-size:12.5px;line-height:19px;color:#444;width:97px;text-align:center;">B</span>
<span style="left:194.00px;top:220.67px;font-size:12.5px;line-height:19px;color:#444;width:63px;text-align:center;">C</span>
<span style="left:258.00px;top:220.67px;font-size:12.5px;line-height:19px;color:#1f6b45;width:63px;text-align:center;">D</span>
<span style="left:322.00px;top:220.67px;font-size:12.5px;line-height:19px;color:#444;width:63px;text-align:center;">E</span>
<span style="left:386.00px;top:220.67px;font-size:12.5px;line-height:19px;color:#444;width:63px;text-align:center;">F</span>
<span style="left:450.00px;top:220.67px;font-size:12.5px;line-height:19px;color:#444;width:63px;text-align:center;">G</span>
<span style="left:514.00px;top:220.67px;font-size:12.5px;line-height:19px;color:#444;width:63px;text-align:center;">H</span>
<span style="left:578.00px;top:220.67px;font-size:12.5px;line-height:19px;color:#444;width:63px;text-align:center;">I</span>
<span style="left:642.00px;top:220.67px;font-size:12.5px;line-height:19px;color:#444;width:63px;text-align:center;">J</span>
<span style="left:706.00px;top:220.67px;font-size:12.5px;line-height:19px;color:#444;width:63px;text-align:center;">K</span>
<span style="left:770.00px;top:220.67px;font-size:12.5px;line-height:19px;color:#444;width:63px;text-align:center;">L</span>
<span style="left:834.00px;top:220.67px;font-size:12.5px;line-height:19px;color:#444;width:63px;text-align:center;">M</span>
<span style="left:10.22px;top:241.17px;font-size:12.5px;line-height:19px;color:#333;">1</span>
<span style="left:10.22px;top:260.17px;font-size:12.5px;line-height:19px;color:#333;">2</span>
<span style="left:10.22px;top:279.17px;font-size:12.5px;line-height:19px;color:#333;">3</span>
<span style="left:10.22px;top:298.17px;font-size:12.5px;line-height:19px;color:#333;">4</span>
<span style="left:10.22px;top:317.17px;font-size:12.5px;line-height:19px;color:#333;">5</span>
<span style="left:10.22px;top:336.17px;font-size:12.5px;line-height:19px;color:#333;">6</span>
<span style="left:10.22px;top:355.17px;font-size:12.5px;line-height:19px;color:#333;">7</span>
<span style="left:10.22px;top:374.17px;font-size:12.5px;line-height:19px;color:#333;">8</span>
<span style="left:10.22px;top:393.17px;font-size:12.5px;line-height:19px;color:#333;">9</span>
<span style="left:6.75px;top:412.17px;font-size:12.5px;line-height:19px;color:#333;">10</span>
<span style="left:6.75px;top:431.17px;font-size:12.5px;line-height:19px;color:#333;">11</span>
<span style="left:6.75px;top:450.17px;font-size:12.5px;line-height:19px;color:#1f6b45;">12</span>
<span style="left:6.75px;top:469.17px;font-size:12.5px;line-height:19px;color:#333;">13</span>
<span style="left:28.90px;top:239.70px;font-size:13px;line-height:20px;color:#1a1a1a;letter-spacing:0.122px;">ExternalID</span>
<span style="left:98.00px;top:239.70px;font-size:13px;line-height:20px;color:#1a1a1a;letter-spacing:0.123px;">SkillLevelListID</span>
<span style="left:195.50px;top:239.70px;font-size:13px;line-height:20px;color:#1a1a1a;letter-spacing:0.700px;">Name</span>
<span style="left:28.90px;top:258.70px;font-size:13px;line-height:20px;color:#1a1a1a;letter-spacing:-1.930px;">L1</span>
<span style="left:98.00px;top:258.70px;font-size:13px;line-height:20px;color:#1a1a1a;letter-spacing:0.353px;">Standard</span>
<span style="left:195.50px;top:258.70px;font-size:13px;line-height:20px;color:#1a1a1a;letter-spacing:0.579px;">Novice</span>
<span style="left:28.90px;top:277.70px;font-size:13px;line-height:20px;color:#1a1a1a;letter-spacing:-1.930px;">L2</span>
<span style="left:98.00px;top:277.70px;font-size:13px;line-height:20px;color:#1a1a1a;letter-spacing:0.353px;">Standard</span>
<span style="left:196.50px;top:277.70px;font-size:13px;line-height:20px;color:#1a1a1a;letter-spacing:-0.110px;">Some</span>
<span style="left:28.90px;top:296.70px;font-size:13px;line-height:20px;color:#1a1a1a;letter-spacing:-1.930px;">L3</span>
<span style="left:98.00px;top:296.70px;font-size:13px;line-height:20px;color:#1a1a1a;letter-spacing:0.353px;">Standard</span>
<span style="left:195.50px;top:296.70px;font-size:13px;line-height:20px;color:#1a1a1a;letter-spacing:0.196px;">Experienced</span>
<span style="left:28.90px;top:315.70px;font-size:13px;line-height:20px;color:#1a1a1a;letter-spacing:-1.930px;">L4</span>
<span style="left:98.00px;top:315.70px;font-size:13px;line-height:20px;color:#1a1a1a;letter-spacing:0.353px;">Standard</span>
<span style="left:195.50px;top:315.70px;font-size:13px;line-height:20px;color:#1a1a1a;letter-spacing:-0.072px;">Expert</span>
<span style="left:28.90px;top:334.70px;font-size:13px;line-height:20px;color:#1a1a1a;letter-spacing:-1.930px;">L5</span>
<span style="left:97.00px;top:334.70px;font-size:13px;line-height:20px;color:#1a1a1a;letter-spacing:0.227px;">Language</span>
<span style="left:195.50px;top:334.70px;font-size:13px;line-height:20px;color:#1a1a1a;letter-spacing:0.579px;">Novice</span>
<span style="left:28.90px;top:353.70px;font-size:13px;line-height:20px;color:#1a1a1a;letter-spacing:-1.930px;">L6</span>
<span style="left:97.00px;top:353.70px;font-size:13px;line-height:20px;color:#1a1a1a;letter-spacing:0.227px;">Language</span>
<span style="left:196.50px;top:353.70px;font-size:13px;line-height:20px;color:#1a1a1a;letter-spacing:-0.110px;">Some</span>
<span style="left:28.90px;top:372.70px;font-size:13px;line-height:20px;color:#1a1a1a;letter-spacing:-1.930px;">L7</span>
<span style="left:97.00px;top:372.70px;font-size:13px;line-height:20px;color:#1a1a1a;letter-spacing:0.227px;">Language</span>
<span style="left:195.50px;top:372.70px;font-size:13px;line-height:20px;color:#1a1a1a;letter-spacing:0.196px;">Experienced</span>
<span style="left:28.90px;top:391.70px;font-size:13px;line-height:20px;color:#1a1a1a;letter-spacing:-1.930px;">L8</span>
<span style="left:97.00px;top:391.70px;font-size:13px;line-height:20px;color:#1a1a1a;letter-spacing:0.227px;">Language</span>
<span style="left:195.50px;top:391.70px;font-size:13px;line-height:20px;color:#1a1a1a;letter-spacing:0.356px;">Fluent</span>
<span style="left:28.90px;top:410.70px;font-size:13px;line-height:20px;color:#1a1a1a;letter-spacing:-1.930px;">L9</span>
<span style="left:98.00px;top:410.70px;font-size:13px;line-height:20px;color:#1a1a1a;letter-spacing:0.378px;">Yes/No</span>
<span style="left:195.50px;top:410.70px;font-size:13px;line-height:20px;color:#1a1a1a;letter-spacing:0.400px;">No</span>
<span style="left:28.90px;top:429.70px;font-size:13px;line-height:20px;color:#1a1a1a;letter-spacing:-1.380px;">L10</span>
<span style="left:98.00px;top:429.70px;font-size:13px;line-height:20px;color:#1a1a1a;letter-spacing:0.378px;">Yes/No</span>
<span style="left:196.50px;top:429.70px;font-size:13px;line-height:20px;color:#1a1a1a;letter-spacing:-1.154px;">Yes</span>
<span style="left:118.00px;top:485.50px;font-size:13px;line-height:20px;color:#444;letter-spacing:-0.385px;">Skill Level Lists</span>
<span style="left:231.30px;top:485.50px;font-size:13px;line-height:20px;color:#1f6b45;font-weight:700;letter-spacing:-0.281px;">Skill Levels</span>
<span style="left:325.00px;top:486.77px;font-size:12.5px;line-height:19px;color:#444;letter-spacing:-0.284px;">Skills</span>
<span style="left:384.30px;top:485.50px;font-size:13px;line-height:20px;color:#444;letter-spacing:-0.230px;">Skill Assignmen</span>
<span style="left:13.70px;top:512.89px;font-size:11px;line-height:16px;color:#3b3b3b;letter-spacing:-0.574px;">Ready</span>
<span style="left:81.30px;top:512.89px;font-size:11px;line-height:16px;color:#3b3b3b;letter-spacing:0.236px;">Accessibility: Good to go</span>
<span style="left:491.90px;top:513.89px;font-size:11px;line-height:16px;color:#3b3b3b;letter-spacing:0.095px;">Display Settings</span>
<span style="left:857.60px;top:512.89px;font-size:11px;line-height:16px;color:#3b3b3b;letter-spacing:-0.684px;">100%</span>
</div></body></html>
